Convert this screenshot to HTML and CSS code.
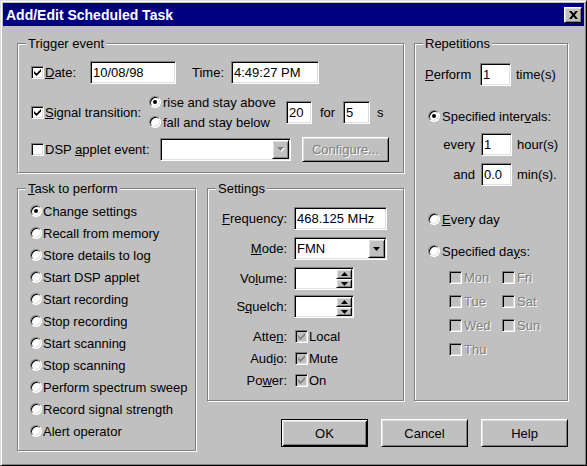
FILE: index.html
```html
<!DOCTYPE html>
<html lang="en">
<head>
<meta charset="utf-8">
<title>Add/Edit Scheduled Task</title>
<link rel="stylesheet" href="styles.css">
</head>
<body>
<div class="window">
  <div class="titlebar">
    <span class="title">Add/Edit Scheduled Task</span>
    <span class="close raised"><svg width="9" height="8" viewBox="0 0 9 8"><path d="M0 0H2.5L4.5 2.5L6.5 0H9L5.8 4L9 8H6.5L4.5 5.5L2.5 8H0L3.2 4Z"/></svg></span>
  </div>
  <div class="content">
    <section class="group trigger">
      <span class="legend">Trigger event</span>
      <div class="trow row-date">
        <span class="cb"><svg class="chk" width="7" height="7" viewBox="0 0 7 7"><path d="M0 2L2.5 4.5L7 0V2.5L2.5 7L0 4.5Z"/></svg></span>
        <span class="lbl lbl-date"><u>D</u>ate:</span>
        <span class="field f-date">10/08/98</span>
        <span class="lbl lbl-time">Time:</span>
        <span class="field f-time">4:49:27 PM</span>
      </div>
      <div class="trow row-signal">
        <span class="cb"><svg class="chk" width="7" height="7" viewBox="0 0 7 7"><path d="M0 2L2.5 4.5L7 0V2.5L2.5 7L0 4.5Z"/></svg></span>
        <span class="lbl lbl-signal"><u>S</u>ignal transition:</span>
        <div class="radios">
          <div class="opt"><span class="radio on"></span><span class="opt-text">rise and stay above</span></div>
          <div class="opt"><span class="radio"></span><span class="opt-text">fall and stay below</span></div>
        </div>
        <span class="field f-n20">20</span>
        <span class="lbl lbl-for">for</span>
        <span class="field f-n5">5</span>
        <span class="lbl lbl-s">s</span>
      </div>
      <div class="trow row-dsp">
        <span class="cb"></span>
        <span class="lbl lbl-dsp">DSP <u>a</u>pplet event:</span>
        <span class="field combo f-dsp"><span class="combo-text"></span><span class="drop raised"><svg width="8" height="5" viewBox="0 0 8 5"><path class="tri-hi" d="M1 1H8L4.5 5Z"/><path class="tri-dis" d="M0 0H7L3.5 4Z"/></svg></span></span>
        <span class="btn raised btn-config"><span class="dis-text">Configure...</span></span>
      </div>
    </section>

    <section class="group reps">
      <span class="legend">Repetitions</span>
      <div class="rrow r-perform"><span class="rlbl-perf"><u>P</u>erform</span><span class="field f-rep">1</span><span class="unit">time(s)</span></div>
      <div class="opt r-int"><span class="radio on"></span><span class="opt-text">Specified inter<u>v</u>als:</span></div>
      <div class="rrow r-every"><span class="rlbl">every</span><span class="field f-rep">1</span><span class="unit">hour(s)</span></div>
      <div class="rrow r-and"><span class="rlbl">and</span><span class="field f-rep">0.0</span><span class="unit">min(s).</span></div>
      <div class="opt r-everyday"><span class="radio"></span><span class="opt-text"><u>E</u>very day</span></div>
      <div class="opt r-days"><span class="radio"></span><span class="opt-text">Specified da<u>y</u>s:</span></div>
      <div class="days">
        <div class="day"><span class="cb dis"></span><span class="dis-text">Mon</span></div>
        <div class="day"><span class="cb dis"></span><span class="dis-text">Tue</span></div>
        <div class="day"><span class="cb dis"></span><span class="dis-text">Wed</span></div>
        <div class="day"><span class="cb dis"></span><span class="dis-text">Thu</span></div>
        <div class="day"><span class="cb dis"></span><span class="dis-text">Fri</span></div>
        <div class="day"><span class="cb dis"></span><span class="dis-text">Sat</span></div>
        <div class="day"><span class="cb dis"></span><span class="dis-text">Sun</span></div>
      </div>
    </section>

    <section class="group task">
      <span class="legend"><u>T</u>ask to perform</span>
      <ul class="task-list">
        <li class="opt"><span class="radio on"></span><span class="opt-text">Change settings</span></li>
        <li class="opt"><span class="radio"></span><span class="opt-text">Recall from memory</span></li>
        <li class="opt"><span class="radio"></span><span class="opt-text">Store details to log</span></li>
        <li class="opt"><span class="radio"></span><span class="opt-text">Start DSP applet</span></li>
        <li class="opt"><span class="radio"></span><span class="opt-text">Start recording</span></li>
        <li class="opt"><span class="radio"></span><span class="opt-text">Stop recording</span></li>
        <li class="opt"><span class="radio"></span><span class="opt-text">Start scanning</span></li>
        <li class="opt"><span class="radio"></span><span class="opt-text">Stop scanning</span></li>
        <li class="opt"><span class="radio"></span><span class="opt-text">Perform spectrum sweep</span></li>
        <li class="opt"><span class="radio"></span><span class="opt-text">Record signal strength</span></li>
        <li class="opt"><span class="radio"></span><span class="opt-text">Alert operator</span></li>
      </ul>
    </section>

    <section class="group settings">
      <span class="legend">Settings</span>
      <div class="srow s-freq"><span class="slbl"><u>F</u>requency:</span><span class="field f-freq">468.125 MHz</span></div>
      <div class="srow s-mode"><span class="slbl"><u>M</u>ode:</span><span class="field combo f-mode"><span class="combo-text">FMN</span><span class="drop raised"><svg width="7" height="4" viewBox="0 0 7 4"><path d="M0 0H7L3.5 4Z"/></svg></span></span></div>
      <div class="srow s-vol"><span class="slbl">Vo<u>l</u>ume:</span><span class="field spin"><span class="spin-btns"><span class="spin-b spin-up raised"><svg width="7" height="4" viewBox="0 0 7 4"><path d="M0 4H7L3.5 0Z"/></svg></span><span class="spin-b spin-dn raised"><svg width="7" height="4" viewBox="0 0 7 4"><path d="M0 0H7L3.5 4Z"/></svg></span></span></span></div>
      <div class="srow s-sq"><span class="slbl">S<u>q</u>uelch:</span><span class="field spin"><span class="spin-btns"><span class="spin-b spin-up raised"><svg width="7" height="4" viewBox="0 0 7 4"><path d="M0 4H7L3.5 0Z"/></svg></span><span class="spin-b spin-dn raised"><svg width="7" height="4" viewBox="0 0 7 4"><path d="M0 0H7L3.5 4Z"/></svg></span></span></span></div>
      <div class="srow s-chk s-first"><span class="slbl">Atte<u>n</u>:</span><span class="cb dis"><svg class="chk" width="7" height="7" viewBox="0 0 7 7"><path d="M0 2L2.5 4.5L7 0V2.5L2.5 7L0 4.5Z"/></svg></span><span class="cb-text">Local</span></div>
      <div class="srow s-chk"><span class="slbl">Aud<u>i</u>o:</span><span class="cb dis"><svg class="chk" width="7" height="7" viewBox="0 0 7 7"><path d="M0 2L2.5 4.5L7 0V2.5L2.5 7L0 4.5Z"/></svg></span><span class="cb-text">Mute</span></div>
      <div class="srow s-chk"><span class="slbl">Po<u>w</u>er:</span><span class="cb dis"><svg class="chk" width="7" height="7" viewBox="0 0 7 7"><path d="M0 2L2.5 4.5L7 0V2.5L2.5 7L0 4.5Z"/></svg></span><span class="cb-text">On</span></div>
    </section>

    <div class="buttons">
      <span class="btn default">OK</span>
      <span class="btn raised">Cancel</span>
      <span class="btn raised">Help</span>
    </div>
  </div>
</div>
</body>
</html>
```

FILE: styles.css
```css
* { box-sizing: border-box; }
html, body { margin: 0; padding: 0; }
body {
  width: 587px;
  height: 466px;
  overflow: hidden;
  background: #c0c0c0;
  color: #000;
  font-family: "Liberation Sans", Arial, sans-serif;
  font-size: 13px;
  line-height: 15px;
}
u { text-decoration: underline; text-underline-offset: 1px; }

.window {
  width: 587px;
  height: 466px;
  padding: 2px;
  background: #c0c0c0;
  border: 1px solid;
  border-color: #dfdfdf #000 #000 #dfdfdf;
  box-shadow: inset 1px 1px #fff, inset -1px -1px #808080;
}

.titlebar {
  height: 23px;
  background: #000080;
  color: #fff;
  display: flex;
  align-items: center;
  justify-content: space-between;
  padding: 0 2px 0 3px;
}
.title { font-weight: bold; font-size: 14px; line-height: 16px; }

.raised {
  background: #c0c0c0;
  border: 1px solid;
  border-color: #fff #000 #000 #fff;
  box-shadow: inset 1px 1px #dfdfdf, inset -1px -1px #808080;
}
.close {
  width: 18px;
  height: 16px;
  margin-top: 1px;
  display: flex;
  align-items: center;
  justify-content: center;
}
.close svg { fill: #000; display: block; }

.content {
  display: grid;
  grid-template-columns: 179px 11px 197px 10px 154px;
  grid-template-rows: 130px 15px 213px 50px;
  padding: 17px 0 0 14px;
}

.group {
  position: relative;
  border: 1px solid #808080;
  box-shadow: inset 1px 1px #fff, 1px 1px #fff;
}
.legend {
  position: absolute;
  top: -8px;
  left: 8px;
  padding: 0 2px;
  background: #c0c0c0;
  line-height: 15px;
  white-space: nowrap;
}

/* common controls */
.field {
  display: block;
  flex: none;
  height: 23px;
  padding: 0 2px;
  line-height: 21px;
  white-space: nowrap;
  background: #fff;
  border: 1px solid;
  border-color: #808080 #fff #fff #808080;
  box-shadow: inset 1px 1px #000, inset -1px -1px #dfdfdf;
}
.combo { display: flex; align-items: center; padding: 1px; }
.combo-text { flex: 1; padding-left: 1px; }
.drop {
  width: 17px;
  height: 19px;
  flex: none;
  display: flex;
  align-items: center;
  justify-content: center;
}
.drop svg { display: block; fill: #000; }
.drop .tri-hi { fill: #fff; }
.drop .tri-dis { fill: #808080; }

.spin { width: 60px; display: flex; justify-content: flex-end; padding: 1px; }
.spin-btns { display: flex; flex-direction: column; width: 16px; }
.spin-b { display: flex; align-items: center; justify-content: center; }
.spin-b svg { display: block; fill: #000; }
.spin-up { height: 10px; }
.spin-dn { height: 9px; }

.cb {
  width: 13px;
  height: 13px;
  flex: none;
  display: flex;
  align-items: center;
  justify-content: center;
  background: #fff;
  border: 1px solid;
  border-color: #808080 #fff #fff #808080;
  box-shadow: inset 1px 1px #000, inset -1px -1px #dfdfdf;
}
.cb .chk { display: block; fill: #000; }
.cb.dis { background: #c0c0c0; }
.cb.dis .chk { fill: #808080; }

.radio {
  position: relative;
  width: 12px;
  height: 12px;
  flex: none;
  border-radius: 50%;
  background: #fff;
  border: 1px solid;
  border-color: #808080 #fff #fff #808080;
  box-shadow: inset 1px 1px #000, inset -1px -1px #dfdfdf;
}
.radio.on::after {
  content: "";
  position: absolute;
  left: 3px;
  top: 3px;
  width: 4px;
  height: 4px;
  border-radius: 50%;
  background: #000;
}
.opt { display: flex; align-items: center; height: 20px; }
.opt-text { margin-left: 2px; white-space: nowrap; }

.dis-text { color: #808080; text-shadow: 1px 1px 0 #fff; }

.btn {
  width: 87px;
  height: 28px;
  display: flex;
  align-items: center;
  justify-content: center;
  white-space: nowrap;
}
.btn.default {
  background: #c0c0c0;
  border: 1px solid #000;
  box-shadow: inset 1px 1px #fff, inset -1px -1px #000, inset 2px 2px #dfdfdf, inset -2px -2px #808080;
}

/* trigger event */
.trigger { grid-column: 1 / 4; grid-row: 1; padding: 17px 0 0 13px; }
.trow { display: flex; align-items: center; }
.lbl { white-space: nowrap; flex: none; }
.row-date { height: 23px; }
.row-signal { height: 40px; margin-top: 8px; }
.row-dsp { height: 25px; margin-top: 5px; }
.lbl-date { width: 46px; padding-left: 1px; }
.f-date { width: 86px; }
.lbl-time { width: 55px; padding-left: 16px; }
.f-time { width: 88px; }
.lbl-signal { width: 105px; padding-left: 1px; }
.radios { width: 137px; flex: none; display: flex; flex-direction: column; }
.f-n20 { width: 26px; }
.lbl-for { width: 31px; padding-left: 8px; }
.f-n5 { width: 27px; }
.lbl-s { padding-left: 7px; }
.lbl-dsp { width: 116px; padding-left: 1px; }
.f-dsp { width: 131px; }
.btn-config { width: 87px; height: 25px; margin-left: 11px; }

/* repetitions */
.reps { grid-column: 5; grid-row: 1 / 4; padding-top: 19px; }
.rrow { display: flex; align-items: center; height: 23px; }
.r-perform { padding-left: 10px; }
.rlbl-perf { width: 55px; }
.f-rep { width: 31px; }
.unit { margin-left: 5px; white-space: nowrap; }
.rlbl { width: 60px; text-align: right; margin-right: 6px; }
.r-int { margin-top: 20px; padding-left: 13px; }
.r-every { margin-top: 7px; }
.r-and { margin-top: 7px; }
.r-everyday { margin-top: 23px; padding-left: 13px; }
.r-days { margin-top: 12px; padding-left: 13px; }
.days {
  margin-top: 4px;
  padding-left: 34px;
  display: grid;
  grid-template-columns: 53px 53px;
  grid-template-rows: repeat(4, 24px);
  grid-auto-flow: column;
}
.day { display: flex; align-items: center; }
.day .dis-text { margin-left: 2px; }

/* task */
.task { grid-column: 1; grid-row: 3 / 5; padding: 11px 0 0 12px; }
.task-list { list-style: none; margin: 0; padding: 0; }
.task-list .opt { height: 22px; }
.task-list .opt-text { margin-left: 1px; }

/* settings */
.settings { grid-column: 3; grid-row: 3; padding-top: 18px; }
.srow { display: flex; align-items: center; height: 23px; }
.slbl { width: 79px; margin-right: 7px; text-align: right; white-space: nowrap; flex: none; }
.f-freq, .f-mode { width: 93px; }
.s-mode, .s-vol { margin-top: 7px; }
.s-sq { margin-top: 5px; }
.s-chk { height: 22px; }
.s-first { margin-top: 7px; }
.s-chk .cb { margin-left: 1px; }
.cb-text { margin-left: 1px; }

/* buttons */
.buttons {
  grid-column: 3 / 6;
  grid-row: 4;
  display: flex;
  justify-content: flex-end;
  align-items: flex-start;
  gap: 13px;
  padding-top: 18px;
}
```
